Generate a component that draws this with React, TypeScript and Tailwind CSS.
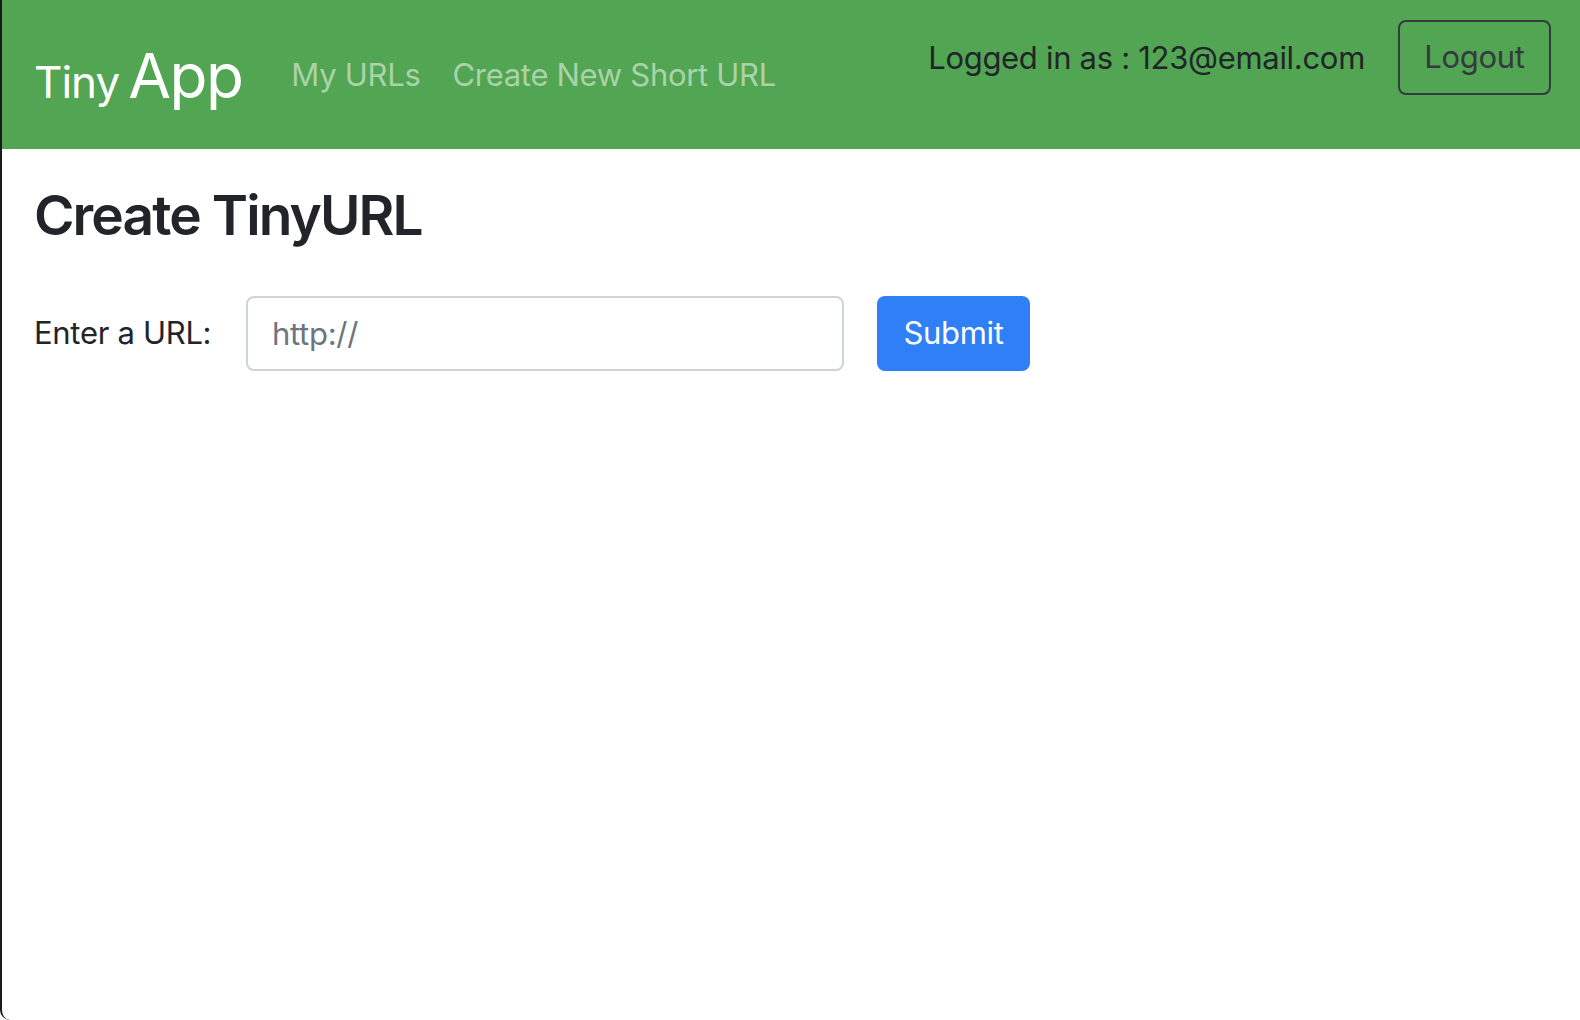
import React from "react";

export default function App() {
  const font = { fontFamily: "Inter, 'Noto Sans', 'Liberation Sans', sans-serif" };
  return (
    <div
      className="w-[1580px] h-[1020px] bg-white border-l-2 border-[#1a1a1a] rounded-bl-[10px] overflow-hidden text-[#212529]"
      style={font}
    >
      <header className="h-[149px] bg-[#52a552] flex items-center pl-[32px] pr-[29px]">
        <a className="flex items-baseline text-white leading-none pt-[2px]" href="#">
          <span className="text-[44px] tracking-[-1px]">Tiny</span>
          <span className="text-[62px] tracking-[-1.5px] ml-[9px]">App</span>
        </a>
        <nav className="flex items-center ml-[33px] text-[31px] tracking-[-0.3px] text-[#aad3aa] pt-[2px]">
          <a className="px-[16px]" href="#">My URLs</a>
          <a className="px-[16px]" href="#">Create New Short URL</a>
        </nav>
        <div className="ml-auto self-start mt-[20px] flex items-center">
          <span className="text-[31px] tracking-[-0.3px] text-[#212529] pt-[2px]">Logged in as : 123@email.com</span>
          <button className="ml-[33px] h-[75px] w-[153px] border-2 border-[#343a40] rounded-[8px] text-[31px] tracking-[-0.3px] text-[#343a40]">
            Logout
          </button>
        </div>
      </header>
      <main className="pl-[32px] pt-[33px]">
        <h3 className="text-[55px] font-semibold leading-[1.2] tracking-[-1.9px]">Create TinyURL</h3>
        <form className="flex items-center mt-[48px]" onSubmit={(e) => e.preventDefault()}>
          <label className="w-[212px] text-[31px] tracking-[-0.3px]">Enter a URL:</label>
          <input
            className="w-[598px] h-[75px] border-2 border-[#ced4da] rounded-[8px] px-[24px] text-[31px] tracking-[-0.3px] placeholder:text-[#6c757d] outline-none"
            placeholder="http://"
          />
          <button className="ml-[33px] w-[153px] h-[75px] bg-[#2f7ff6] rounded-[8px] text-white text-[31px] tracking-[-0.3px]">
            Submit
          </button>
        </form>
      </main>
    </div>
  );
}
